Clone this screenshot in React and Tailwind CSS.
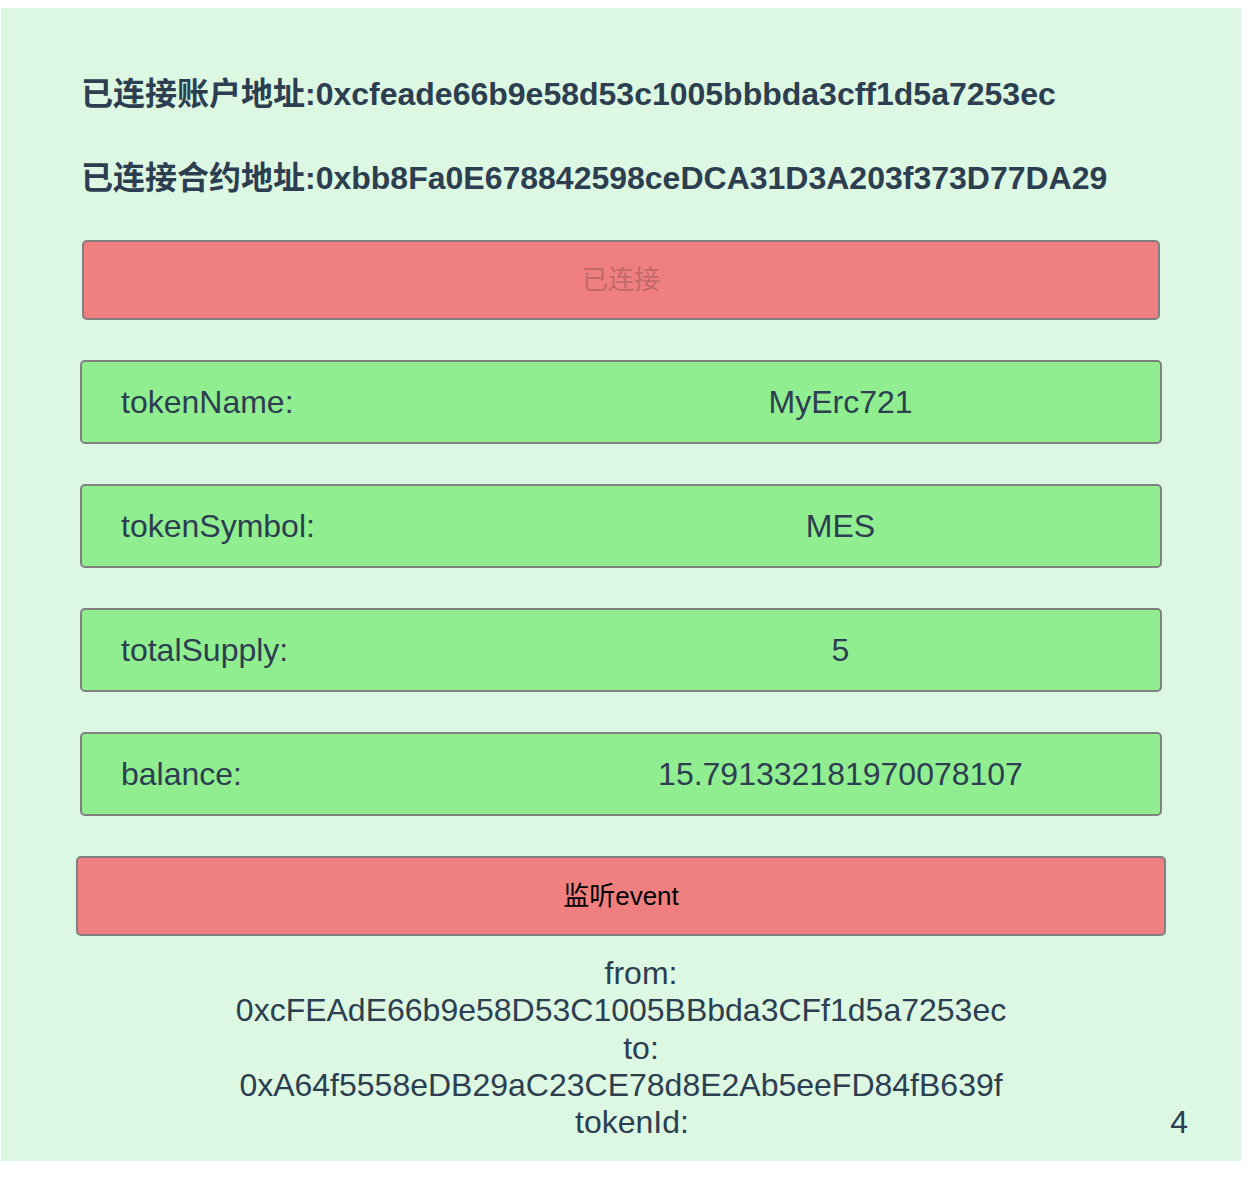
const account = "0xcfeade66b9e58d53c1005bbbda3cff1d5a7253ec";
const contract = "0xbb8Fa0E678842598ceDCA31D3A203f373D77DA29";

const rows = [
  { label: "tokenName:", value: "MyErc721" },
  { label: "tokenSymbol:", value: "MES" },
  { label: "totalSupply:", value: "5" },
  { label: "balance:", value: "15.791332181970078107" },
];

const font = { fontFamily: '"Liberation Sans", Arial, "Noto Sans CJK SC", sans-serif' };

export default function App() {
  return (
    <div className="bg-white min-h-[1179px] pt-2" style={font}>
      <div className="ml-px w-[1240px] h-[1153px] bg-[#dcf7e2] text-[#2c3e50] pt-[68px]">
        <h1 className="pl-[80px] text-[32px] leading-[37px] font-bold">
          已连接账户地址:{account}
        </h1>
        <h1 className="pl-[80px] mt-[47px] text-[32px] leading-[37px] font-bold">
          已连接合约地址:{contract}
        </h1>

        <button
          disabled
          className="block mx-auto mt-[43px] w-[1078px] h-[80px] bg-[#f08080] border-2 border-[#808080] rounded-[5px] text-[26px] text-[#c2696b]"
        >
          已连接
        </button>

        <div className="flex flex-col items-center gap-[40px] mt-[40px]">
          {rows.map((r) => (
            <div
              key={r.label}
              className="flex items-center w-[1082px] h-[84px] bg-[#90ee90] border-2 border-[#808080] rounded-[5px] pl-[39px] text-[32px] leading-[37px]"
            >
              <span className="w-[400px]">{r.label}</span>
              <span className="flex-1 text-center">{r.value}</span>
            </div>
          ))}
        </div>

        <button className="block mx-auto mt-[40px] w-[1090px] h-[80px] bg-[#f08080] border-2 border-[#808080] rounded-[5px] text-[26px] text-black">
          监听event
        </button>

        <div className="mt-[19px] text-center text-[32px] leading-[37.3px]">
          <div className="pl-10">from:</div>
          <div>0xcFEAdE66b9e58D53C1005BBbda3CFf1d5a7253ec</div>
          <div className="pl-10">to:</div>
          <div>0xA64f5558eDB29aC23CE78d8E2Ab5eeFD84fB639f</div>
          <div className="grid grid-cols-[1fr_auto_1fr]">
            <span />
            <span className="pl-[22px]">tokenId:</span>
            <span className="justify-self-end mr-[53px]">4</span>
          </div>
        </div>
      </div>
    </div>
  );
}
